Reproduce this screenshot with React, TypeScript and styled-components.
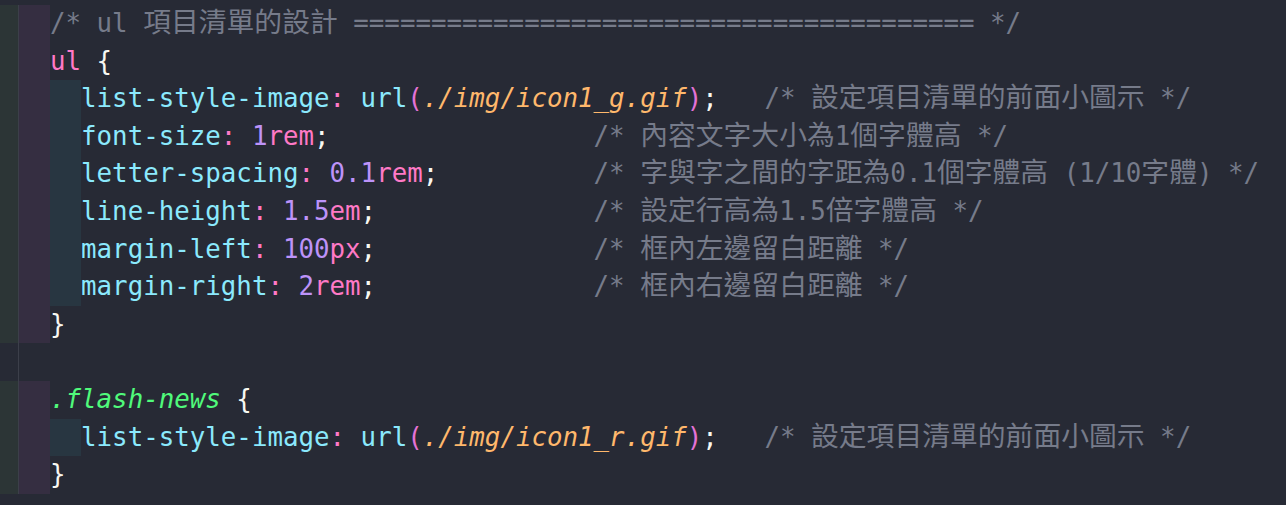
import React from "react";
import styled, { createGlobalStyle } from "styled-components";

const Global = createGlobalStyle`
  html, body {
    margin: 0;
    padding: 0;
    background: #272a35;
  }
  #root {
    min-height: 505px;
  }
`;

const palette = {
  comment: "#767b8a",
  pink: "#ff79c6",
  cyan: "#8be9fd",
  purple: "#bd93f9",
  orange: "#ffb86c",
  green: "#50fa7b",
  white: "#f8f8f2",
  paren: "#e472d6",
} as const;

type ColorKey = keyof typeof palette;

const tones = {
  green: "#2c3536",
  purple: "#352e41",
  teal: "#283641",
  none: "transparent",
} as const;

type Tone = keyof typeof tones;

const Editor = styled.div`
  display: flex;
  flex-direction: column;
  padding-top: 5px;
  width: 1286px;
  height: 505px;
  overflow: hidden;
  background: #272a35;
  font-family: "DejaVu Sans Mono", "Liberation Mono", monospace;
  font-size: 25.8px;
`;

const Row = styled.div`
  display: flex;
  align-items: stretch;
  height: 37.6px;
  line-height: 37.6px;
`;

const Guide = styled.div<{ $tone: Tone; $w: number }>`
  flex: 0 0 ${(p) => p.$w}px;
  background: ${(p) => tones[p.$tone]};
`;

const Rule = styled.div`
  flex: 0 0 1.8px;
  background: #3c3f4a;
`;

const Code = styled.div`
  white-space: pre;
  color: ${palette.white};
`;

const Indent = styled.span`
  display: inline-block;
  background: ${tones.teal};
  height: 37.6px;
  vertical-align: top;
`;

const Tok = styled.span<{ $c: ColorKey; $i?: boolean }>`
  color: ${(p) => palette[p.$c]};
  font-style: ${(p) => (p.$i ? "italic" : "normal")};
`;

const Cjk = styled.span`
  font-family: "Noto Sans CJK TC", "Noto Sans CJK SC", sans-serif;
  font-size: 27.8px;
  line-height: 1;
`;

const CJK_RE = /([\u3000-\u303f\u3400-\u9fff\uff00-\uffef]+)/;

function renderText(text: string) {
  return text.split(CJK_RE).map((part, idx) =>
    idx % 2 === 1 ? <Cjk key={idx}>{part}</Cjk> : <React.Fragment key={idx}>{part}</React.Fragment>
  );
}

type Token = [string, ColorKey, boolean?];

type LineDef = {
  indent: number; // 0 = empty line, 1 = top level, 2 = inside block
  tokens: Token[];
};

const prop = (name: string): Token[] => [
  [name, "cyan"],
  [":", "pink"],
  [" ", "white"],
];

const unit = (num: string, u: string): Token[] => [
  [num, "purple"],
  [u, "pink"],
  [";", "white"],
];

const lines: LineDef[] = [
  {
    indent: 1,
    tokens: [["/* ul 項目清單的設計 " + "=".repeat(40) + " */", "comment"]],
  },
  { indent: 1, tokens: [["ul", "pink"], [" {", "white"]] },
  {
    indent: 2,
    tokens: [
      ...prop("list-style-image"),
      ["url", "cyan"],
      ["(", "paren"],
      ["./img/icon1_g.gif", "orange", true],
      [")", "paren"],
      [";", "white"],
      ["   ", "white"],
      ["/* 設定項目清單的前面小圖示 */", "comment"],
    ],
  },
  {
    indent: 2,
    tokens: [
      ...prop("font-size"),
      ...unit("1", "rem"),
      [" ".repeat(17), "white"],
      ["/* 內容文字大小為1個字體高 */", "comment"],
    ],
  },
  {
    indent: 2,
    tokens: [
      ...prop("letter-spacing"),
      ...unit("0.1", "rem"),
      [" ".repeat(10), "white"],
      ["/* 字與字之間的字距為0.1個字體高 (1/10字體) */", "comment"],
    ],
  },
  {
    indent: 2,
    tokens: [
      ...prop("line-height"),
      ...unit("1.5", "em"),
      [" ".repeat(14), "white"],
      ["/* 設定行高為1.5倍字體高 */", "comment"],
    ],
  },
  {
    indent: 2,
    tokens: [
      ...prop("margin-left"),
      ...unit("100", "px"),
      [" ".repeat(14), "white"],
      ["/* 框內左邊留白距離 */", "comment"],
    ],
  },
  {
    indent: 2,
    tokens: [
      ...prop("margin-right"),
      ...unit("2", "rem"),
      [" ".repeat(14), "white"],
      ["/* 框內右邊留白距離 */", "comment"],
    ],
  },
  { indent: 1, tokens: [["}", "white"]] },
  { indent: 0, tokens: [] },
  { indent: 1, tokens: [[".flash-news", "green", true], [" {", "white"]] },
  {
    indent: 2,
    tokens: [
      ...prop("list-style-image"),
      ["url", "cyan"],
      ["(", "paren"],
      ["./img/icon1_r.gif", "orange", true],
      [")", "paren"],
      [";", "white"],
      ["   ", "white"],
      ["/* 設定項目清單的前面小圖示 */", "comment"],
    ],
  },
  { indent: 1, tokens: [["}", "white"]] },
];

const Line: React.FC<{ def: LineDef }> = ({ def }) => {
  const filled = def.indent > 0;
  return (
    <Row>
      <Guide $tone={filled ? "green" : "none"} $w={17.5} />
      <Rule />
      <Guide $tone={filled ? "purple" : "none"} $w={30.7} />
      <Code>
        {def.indent > 1 && <Indent>{"  "}</Indent>}
        {def.tokens.map(([text, c, i], idx) => (
          <Tok key={idx} $c={c} $i={i}>
            {renderText(text)}
          </Tok>
        ))}
      </Code>
    </Row>
  );
};

export default function App() {
  return (
    <>
      <Global />
      <Editor>
        {lines.map((l, idx) => (
          <Line key={idx} def={l} />
        ))}
      </Editor>
    </>
  );
}
